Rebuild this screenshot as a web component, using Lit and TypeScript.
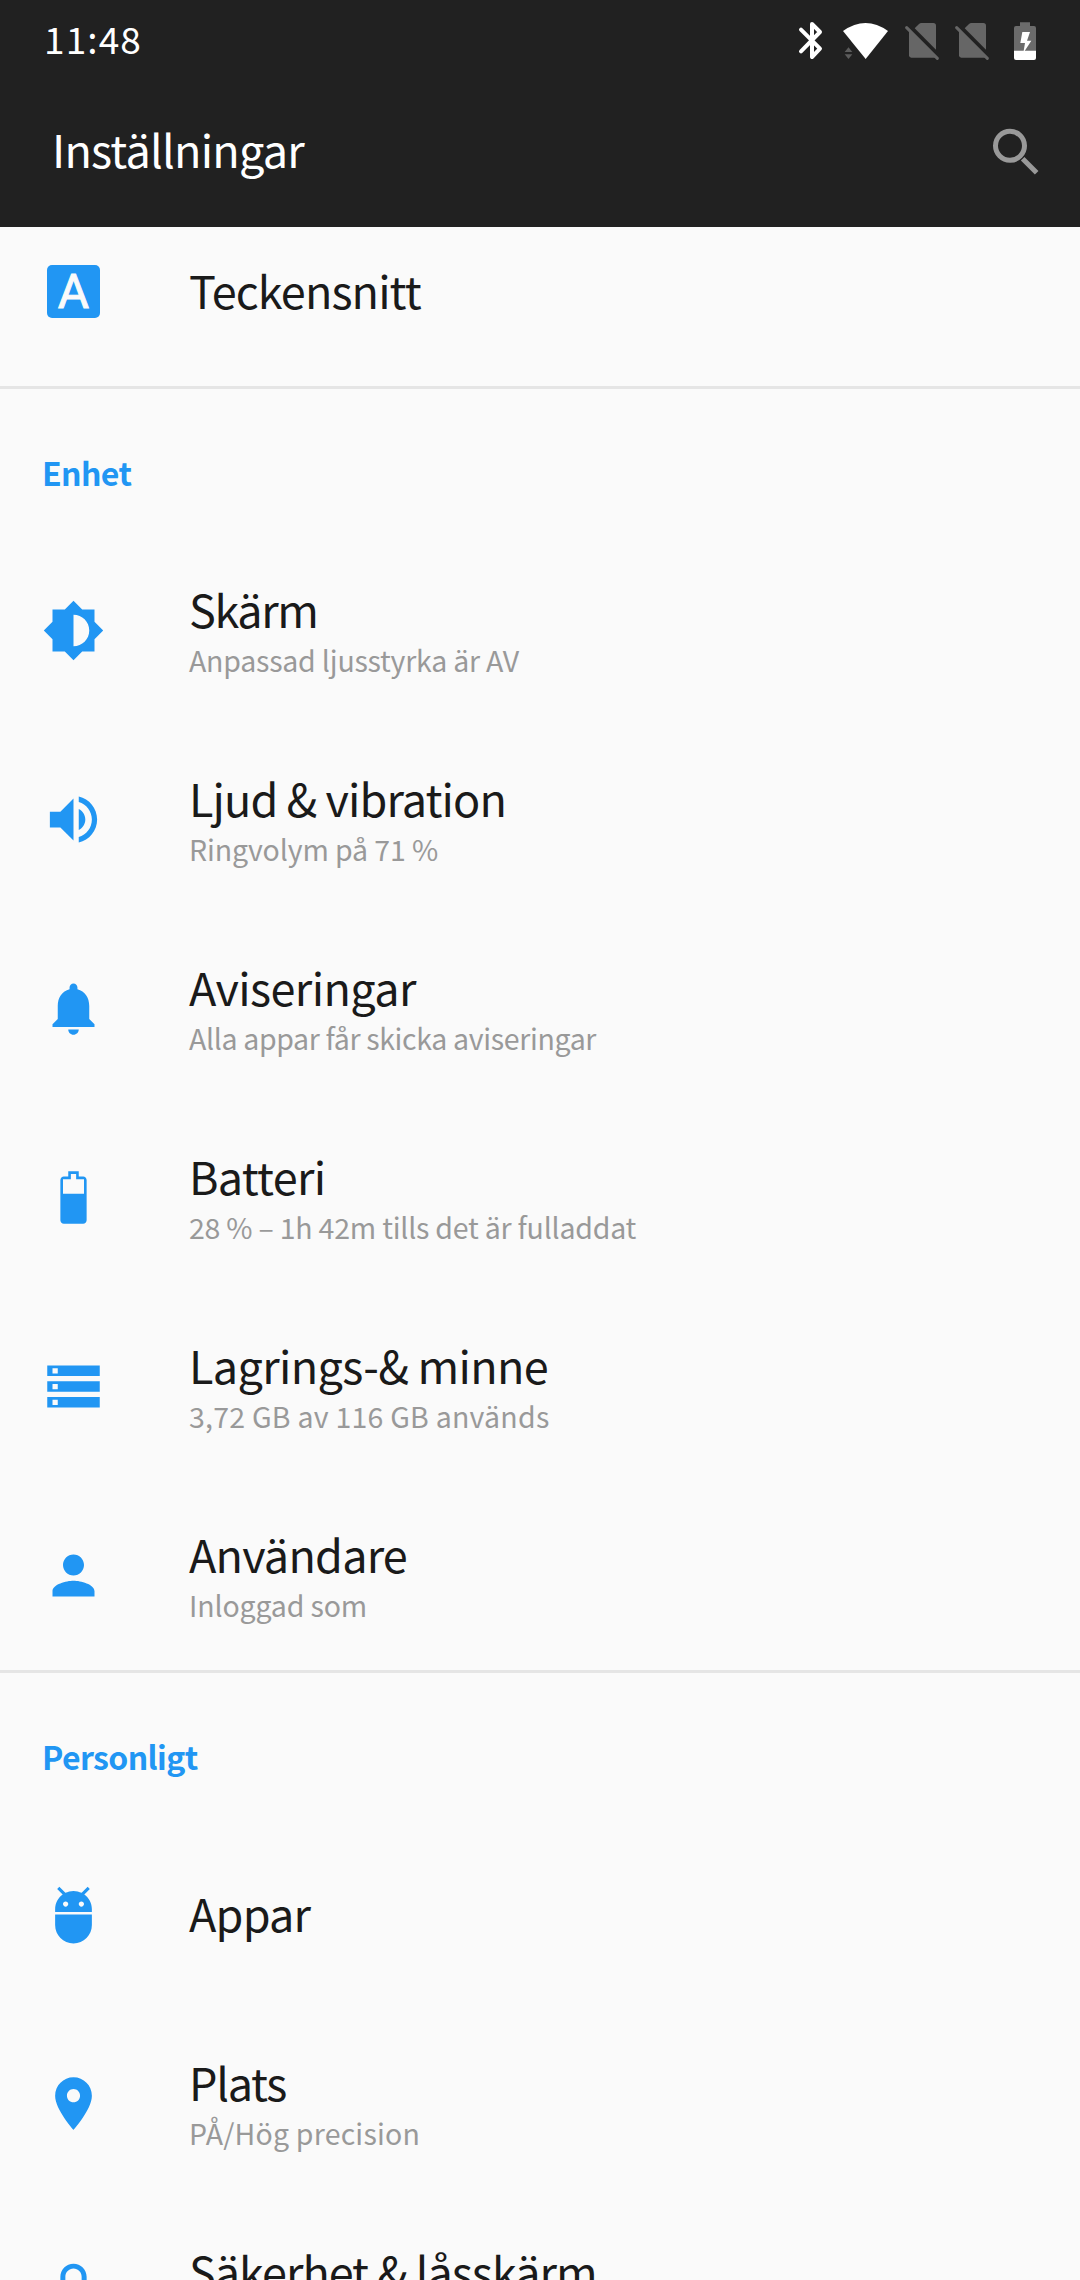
import { LitElement, html, svg, css, nothing, type TemplateResult, type SVGTemplateResult } from "lit";
import { customElement, property } from "lit/decorators.js";
import { styleMap } from "lit/directives/style-map.js";

const paths: Record<string, SVGTemplateResult> = {
  display: svg`<path d="M20 15.31L23.31 12 20 8.69V4h-4.69L12 .69 8.69 4H4v4.69L.69 12 4 15.31V20h4.69L12 23.31 15.31 20H20v-4.69zM12 18V6c3.31 0 6 2.69 6 6s-2.69 6-6 6z"/>`,
  sound: svg`<path d="M3 9v6h4l5 5V4L7 9H3zm13.5 3c0-1.77-1.02-3.29-2.5-4.03v8.05c1.48-.73 2.5-2.25 2.5-4.02zM14 3.23v2.06c2.89.86 5 3.54 5 6.71s-2.11 5.85-5 6.71v2.06c4.01-.91 7-4.49 7-8.77s-2.99-7.86-7-8.77z"/>`,
  bell: svg`<path d="M12 22c1.1 0 2-.9 2-2h-4c0 1.1.89 2 2 2zm6-6v-5c0-3.07-1.64-5.64-4.5-6.32V4c0-.83-.67-1.5-1.5-1.5s-1.5.67-1.5 1.5v.68C7.63 5.36 6 7.92 6 11v5l-2 2v1h16v-1l-2-2z"/>`,
  battery: svg`<path fill-rule="evenodd" d="M15.67 4H14V2h-4v2H8.33C7.6 4 7 4.6 7 5.33v15.33C7 21.4 7.6 22 8.33 22h7.33c.74 0 1.34-.6 1.34-1.33V5.33C17 4.6 16.4 4 15.67 4zM8 10.6V5h3V3h2v2h3v5.6z"/>`,
  storage: svg`<path d="M2 20h20v-4H2v4zm2-3h2v2H4v-2zM2 4v4h20V4H2zm4 3H4V5h2v2zm-4 7h20v-4H2v4zm2-3h2v2H4v-2z"/>`,
  user: svg`<path d="M12 12c2.21 0 4-1.79 4-4s-1.79-4-4-4-4 1.79-4 4 1.79 4 4 4zm0 2c-2.67 0-8 1.34-8 4v2h16v-2c0-2.66-5.33-4-8-4z"/>`,
  apps: svg`<path d="M5 16c0 3.87 3.13 7 7 7s7-3.13 7-7v-4H5v4zM16.12 4.37l2.1-2.1-.82-.83-2.3 2.31C14.16 3.28 13.12 3 12 3s-2.16.28-3.09.75L6.6 1.44l-.82.83 2.1 2.1C6.14 5.64 5 7.68 5 10v1h14v-1c0-2.32-1.14-4.36-2.88-5.63zM9 9c-.55 0-1-.45-1-1s.45-1 1-1 1 .45 1 1-.45 1-1 1zm6 0c-.55 0-1-.45-1-1s.45-1 1-1 1 .45 1 1-.45 1-1 1z"/>`,
  place: svg`<path d="M12 2C8.13 2 5 5.13 5 9c0 5.25 7 13 7 13s7-7.75 7-13c0-3.87-3.13-7-7-7zm0 9.5c-1.38 0-2.5-1.12-2.5-2.5s1.12-2.5 2.5-2.5 2.5 1.12 2.5 2.5-1.12 2.5-2.5 2.5z"/>`,
  lock: svg`<path d="M18 8h-1V6c0-2.76-2.24-5-5-5S7 3.24 7 6v2H6c-1.1 0-2 .9-2 2v10c0 1.1.9 2 2 2h12c1.1 0 2-.9 2-2V10c0-1.1-.9-2-2-2zM15.1 8H8.9V6c0-1.71 1.39-3.1 3.1-3.1s3.1 1.39 3.1 3.1v2z"/>`,
};

interface Item {
  icon: string;
  label: string;
  summary?: string;
  /** Centres the label when the row has a single line. */
  single?: boolean;
  /** Letter spacing of the label and of the summary, in pixels. */
  track: [number, number?];
}

@customElement("settings-row")
class SettingsRow extends LitElement {
  @property({ attribute: false }) item!: Item;

  static styles = css`
    :host {
      display: flex;
      height: 189px;
      align-items: center;
    }
    .slot {
      flex: none;
      width: 63px;
      height: 63px;
      margin: 0 84px 0 42px;
      display: flex;
      align-items: center;
      justify-content: center;
    }
    svg {
      width: 63px;
      height: 63px;
      fill: #2196f3;
    }
    .letter {
      width: 53px;
      height: 53px;
      border-radius: 5px;
      background: #2196f3;
      color: #fafafa;
      font: 400 48px/54px Roboto, sans-serif;
      -webkit-text-stroke: 0.9px #fafafa;
      text-align: center;
    }
    .text {
      align-self: flex-start;
      padding-top: 48px;
      white-space: nowrap;
    }
    .text.single {
      padding-top: 68px;
    }
    .label {
      font-size: 45px;
      line-height: 50px;
      color: #1a1a1a;
    }
    .summary {
      font-size: 28.5px;
      line-height: 52px;
      color: #999;
    }
  `;

  render(): TemplateResult {
    const { icon, label, summary, single, track } = this.item;
    return html`
      <div class="slot">
        ${icon === "font"
          ? html`<div class="letter">A</div>`
          : html`<svg viewBox="0 0 24 24">${paths[icon]}</svg>`}
      </div>
      <div class="text ${single ? "single" : ""}">
        <div class="label" style=${styleMap({ letterSpacing: `${track[0]}px` })}>${label}</div>
        ${summary
          ? html`<div class="summary" style=${styleMap({ letterSpacing: `${track[1] ?? 0}px` })}>${summary}</div>`
          : nothing}
      </div>
    `;
  }
}

const sections: { title?: string; items: Item[] }[] = [
  { items: [{ icon: "font", label: "Teckensnitt", single: true, track: [-0.9] }] },
  {
    title: "Enhet",
    items: [
      { icon: "display", label: "Skärm", summary: "Anpassad ljusstyrka är AV", track: [-1.4, -0.23] },
      { icon: "sound", label: "Ljud & vibration", summary: "Ringvolym på 71 %", track: [-0.9, -0.1] },
      { icon: "bell", label: "Aviseringar", summary: "Alla appar får skicka aviseringar", track: [-0.6, -0.35] },
      { icon: "battery", label: "Batteri", summary: "28 % – 1h 42m tills det är fulladdat", track: [-0.7, -0.22] },
      { icon: "storage", label: "Lagrings-& minne", summary: "3,72 GB av 116 GB används", track: [-0.65, 0.24] },
      { icon: "user", label: "Användare", summary: "Inloggad som", track: [-0.8, -0.15] },
    ],
  },
  {
    title: "Personligt",
    items: [
      { icon: "apps", label: "Appar", single: true, track: [-0.8] },
      { icon: "place", label: "Plats", summary: "PÅ/Hög precision", track: [-1.3, 0.2] },
      { icon: "lock", label: "Säkerhet & låsskärm", track: [-1.02] },
    ],
  },
];

@customElement("app-root")
class AppRoot extends LitElement {
  static styles = css`
    :host {
      display: flex;
      flex-direction: column;
      width: 1080px;
      height: 2280px;
      overflow: hidden;
      background: #fafafa;
      font-family: "Noto Sans CJK JP", "Noto Sans", sans-serif;
    }
    .top {
      flex: none;
      height: 227px;
      background: #212121;
      color: #fff;
    }
    .status {
      height: 80px;
      box-sizing: border-box;
      padding: 0 43px 0 44px;
      display: flex;
      align-items: center;
    }
    .clock {
      flex: 1;
      font-size: 37px;
      line-height: 76px;
      padding-bottom: 4px;
      letter-spacing: 1.1px;
    }
    .status svg {
      height: 39px;
    }
    .bt {
      width: 25px;
      margin-right: 19px;
    }
    .wifi {
      width: 47px;
      margin-right: 15px;
    }
    .sim {
      width: 36px;
      margin-right: 14px;
    }
    .sim + .batt {
      margin-left: 9px;
    }
    .batt {
      width: 24px;
    }
    .bar {
      height: 147px;
      box-sizing: border-box;
      padding: 0 40px 0 52px;
      display: flex;
      align-items: flex-start;
      justify-content: space-between;
    }
    .title {
      font-size: 45px;
      line-height: 60px;
      padding-top: 39px;
      letter-spacing: -0.78px;
    }
    .search {
      width: 48px;
      height: 48px;
      margin-top: 48px;
    }
    .list {
      flex: 1;
      min-height: 0;
      overflow: hidden;
    }
    .section:first-child {
      margin-top: -30px;
    }
    .section + .section {
      border-top: 3px solid #e5e5e5;
    }
    .heading {
      height: 147px;
      box-sizing: border-box;
      padding: 63px 0 0 42px;
      font-size: 32px;
      line-height: 40px;
      font-weight: 700;
      letter-spacing: -0.6px;
      color: #2196f3;
    }
  `;

  private sim(): TemplateResult {
    return html`<svg class="sim" viewBox="372 60 108 117">
      <g fill="#666">
        <path d="M404 82l13-13q3-3 7-3h36q8 0 8 8v72z" />
        <path d="M387 86v77q0 7 7 7h77z" />
      </g>
      <path d="M380 80l92 92" stroke="#666" stroke-width="9" stroke-linecap="round" />
    </svg>`;
  }

  render(): TemplateResult {
    return html`
      <div class="top">
        <div class="status">
          <div class="clock">11:48</div>
          <svg class="bt" viewBox="54 60 75 117">
            <path
              d="M63 86l57 57-24 25V69l24 24-57 58"
              fill="none"
              stroke="#fff"
              stroke-width="12"
              stroke-linecap="round"
              stroke-linejoin="round"
            />
          </svg>
          <svg class="wifi" viewBox="186 60 141 117">
            <path d="M257 174L189 90Q257 42 324 90z" fill="#fff" />
            <path d="M194 153h23l-11.500-14zM194 160h23l-11.500 14z" fill="#5c5c5c" />
          </svg>
          ${this.sim()}${this.sim()}
          <svg class="batt" viewBox="699 60 72 117">
            <path d="M720 64h30v11h12q6 0 6 6v70h-66V81q0-6 6-6h12z" fill="#6b6b6b" />
            <path d="M702 149h66v22q0 6-6 6h-54q-6 0-6-6z" fill="#fff" />
            <path d="M727 93h23l-9 26h13l-20 31h-3l4-24h-14z" fill="#fff" />
          </svg>
        </div>
        <div class="bar">
          <div class="title">Inställningar</div>
          <svg class="search" viewBox="636 384 144 144">
            <g fill="none" stroke="#999">
              <circle cx="690" cy="437.500" r="43.500" stroke-width="15" />
              <path d="M728 476l42 42" stroke-width="15" />
            </g>
          </svg>
        </div>
      </div>
      <div class="list">
        ${sections.map(
          (s) => html`<div class="section">
            ${s.title ? html`<div class="heading">${s.title}</div>` : nothing}
            ${s.items.map((i) => html`<settings-row .item=${i}></settings-row>`)}
          </div>`,
        )}
      </div>
    `;
  }
}
